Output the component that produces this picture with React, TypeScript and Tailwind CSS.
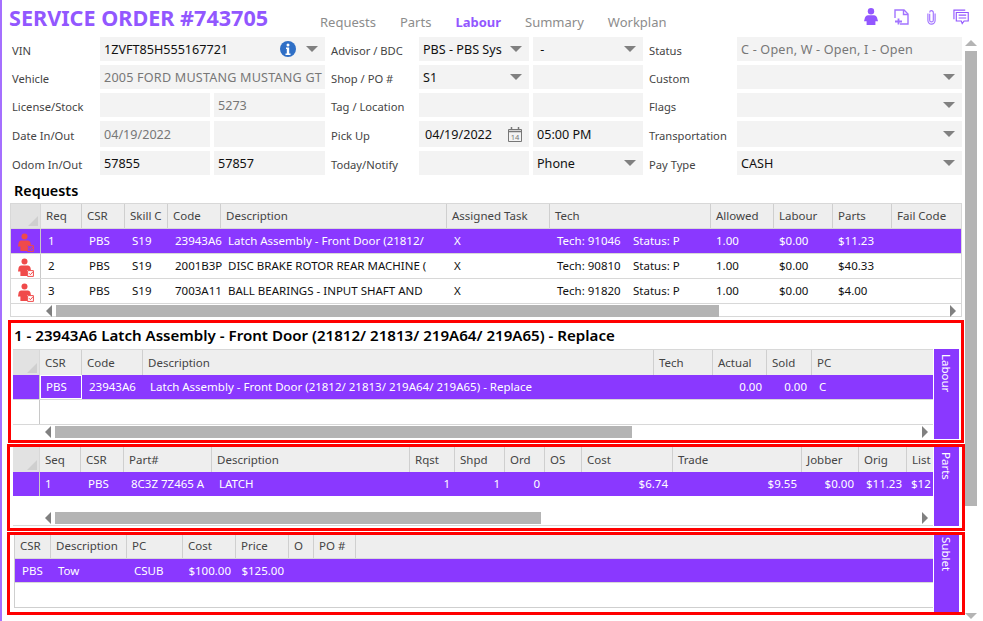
import type { ReactNode } from 'react';

const caret =
  'h-0 w-0 shrink-0 border-x-[6px] border-t-[6px] border-x-transparent border-t-[#808080]';

const Caret = () => <span className={caret} />;

const Label = ({ children }: { children: ReactNode }) => (
  <div className="flex items-center whitespace-nowrap pt-[3px] text-[11.2px] text-[#444]">{children}</div>
);

const Field = ({
  children,
  grey,
  select,
  className = '',
}: {
  children?: ReactNode;
  grey?: boolean;
  select?: boolean;
  className?: string;
}) => (
  <div
    className={`flex items-center justify-between overflow-hidden whitespace-nowrap bg-[#f3f3f3] pl-1 pr-[7px] text-[12.6px] ${
      grey ? 'text-[#777]' : 'text-[#111]'
    } ${className}`}
  >
    <span className="pt-px">{children}</span>
    {select && <Caret />}
  </div>
);

const PersonIcon = () => (
  <svg viewBox="0 0 14 17" className="h-[17px] w-[14px] fill-[#9257ff]">
    <circle cx="7" cy="3.2" r="3.2" />
    <path d="M4 7.2h6c1.5 0 2.5 1 3 2.4l1 3.6h-2.6V17H2.6v-3.8H0l1-3.6c.5-1.4 1.5-2.4 3-2.4z" />
  </svg>
);

const FileIcon = () => (
  <svg
    viewBox="0 0 15 16"
    className="h-[16px] w-[15px] fill-none stroke-[#a274ff] stroke-[1.4]"
  >
    <path d="M6 15h8V5l-4-4H1v8" />
    <path d="M9.5 1v4.5H14" />
    <path d="M4.5 9.5v6M1 12.5h7" strokeWidth="1.8" />
  </svg>
);

const ClipIcon = () => (
  <svg
    viewBox="0 0 10 16"
    className="h-[16px] w-[9px] fill-none stroke-[#a274ff] stroke-[1.3]"
  >
    <path d="M3 4.5v7a2 2 0 0 0 4 0V3a2 2 0 0 0-4 0" />
    <path d="M9 4v8a4 4 0 0 1-8 0V4" />
  </svg>
);

const CommentIcon = () => (
  <svg
    viewBox="0 0 17 17"
    className="h-[16px] w-[16px] fill-none stroke-[#9257ff] stroke-[1.2]"
  >
    <path d="M1 11V1.2h12" />
    <path d="M3.5 3.7h12.7v9h-4.4L9.8 15.5l-1-2.8H3.5z" />
    <path d="M6 6.5h8M6 9.5h8" />
  </svg>
);

const InfoIcon = () => (
  <svg viewBox="0 0 16 16" className="h-[16px] w-[16px] shrink-0">
    <circle cx="8" cy="8" r="8" fill="#2f6fc6" />
    <circle cx="8" cy="4" r="1.5" fill="#fff" />
    <path d="M6 6.5h3.2v6H10.5V14h-5v-1.5h1.3V8H6z" fill="#fff" />
  </svg>
);

const CalendarIcon = () => (
  <svg viewBox="0 0 14 15" className="h-[15px] w-[14px] shrink-0 fill-none stroke-[#777]">
    <path d="M.5 2.5h13v12H.5z" />
    <path d="M.5 4.5h13" strokeWidth="1.5" />
    <path d="M3.5 0v3M10.5 0v3" strokeWidth="1.5" />
    <text x="7" y="13" fontSize="7.5" textAnchor="middle" fill="#777" stroke="none">
      14
    </text>
  </svg>
);

const TechIcon = () => (
  <svg viewBox="0 0 16 19" className="mb-px h-[19px] w-[16px]">
    <circle cx="6.5" cy="3.4" r="3" fill="#f04a4a" />
    <path
      d="M3.2 7.4h6.6c1.6 0 2.4 1 2.7 2.4l.4 2.2H9v6H2.4v-4.6H0l.6-3.6c.3-1.4 1.1-2.4 2.6-2.4z"
      fill="#f04a4a"
    />
    <path d="M9.6 12.6h5.8v5.8H9.6z" fill="none" stroke="#f04a4a" />
    <path d="m11 15.2 1.4 1.5 2.6-3" fill="none" stroke="#f04a4a" />
  </svg>
);

const HScroll = ({ thumb, className }: { thumb: string; className: string }) => (
  <div className={`flex items-center ${className}`}>
    <span className="h-0 w-0 shrink-0 border-y-[6px] border-r-[6px] border-y-transparent border-r-[#808080]" />
    <div className={`ml-[4px] h-[12px] bg-[#b4b4b4] ${thumb}`} />
    <span className="ml-auto h-0 w-0 shrink-0 border-y-[6px] border-l-[6px] border-y-transparent border-l-[#808080]" />
  </div>
);

const Head = ({
  cols,
  labels,
  corner,
  size = 'h-[25px]',
  pad = 'pt-[5px]',
}: {
  cols: string;
  labels: string[];
  corner?: boolean;
  size?: string;
  pad?: string;
}) => (
  <div className={`grid ${size} ${cols} bg-[#eeeeee]`}>
    {corner && (
      <div className="relative border-r border-[#d8d8d8] bg-[#e2e2e2]">
        <span className="absolute bottom-[2px] right-[2px] h-0 w-0 border-b-[10px] border-l-[10px] border-b-[#cfcfcf] border-l-transparent" />
      </div>
    )}
    {labels.map((l, i) => (
      <div
        key={i}
        className={`overflow-hidden whitespace-nowrap border-r border-[#cfcfcf] pl-[5px] text-[#444] last:border-r-0 ${pad}`}
      >
        {l}
      </div>
    ))}
  </div>
);

const Cell = ({ children, right }: { children?: ReactNode; right?: boolean }) => (
  <div className={`whitespace-nowrap pt-[4px] ${right ? 'pr-[5px] text-right' : 'pl-[7px]'}`}>
    {children}
  </div>
);

const SideTab = ({ label, className }: { label: string; className: string }) => (
  <div
    className={`w-[25px] shrink-0 bg-[#8a38ff] text-[11.5px] leading-[25px] text-white [writing-mode:vertical-rl] ${className}`}
  >
    {label}
  </div>
);

const reqCols =
  'grid-cols-[30px_41px_43px_43px_53px_226px_103px_161px_63px_59px_59px_69px]';
const reqLabels = [
  'Req',
  'CSR',
  'Skill C',
  'Code',
  'Description',
  'Assigned Task',
  'Tech',
  'Allowed',
  'Labour',
  'Parts',
  'Fail Code',
];
const requests = [
  ['1', 'S19', '23943A6', 'Latch Assembly - Front Door (21812/', '91046', '$11.23'],
  ['2', 'S19', '2001B3P', 'DISC BRAKE ROTOR REAR MACHINE (', '90810', '$40.33'],
  ['3', 'S19', '7003A11', 'BALL BEARINGS - INPUT SHAFT AND', '91820', '$4.00'],
];

const labourCols = 'grid-cols-[27px_42px_61px_511px_59px_54px_45px_121px]';
const partsCols =
  'grid-cols-[27px_41px_43px_88px_198px_45px_50px_40px_37px_91px_129px_57px_48px_26px]';
const subletCols = 'grid-cols-[36px_76px_56px_53px_53px_25px_42px_1fr]';

export default function App() {
  return (
    <div className="flex h-[621px] w-[983px] overflow-hidden bg-white font-['Open_Sans','Noto_Sans',sans-serif] text-[11.5px] leading-[16px] text-[#111]">
      <div className="w-[2px] shrink-0 bg-[#a56fff]" />

      <div className="w-[963px] shrink-0">
        <div className="flex h-[37px] items-start">
          <h1 className="ml-[7px] w-[311px] whitespace-nowrap pt-[3px] text-[21.6px] font-bold leading-[30px] text-[#9257ff]">
            SERVICE ORDER #743705
          </h1>
          <nav className="flex gap-[24px] pt-[14px] text-[13px] text-[#8c8c8c]">
            <span>Requests</span>
            <span>Parts</span>
            <span className="font-bold text-[#9257ff]">Labour</span>
            <span>Summary</span>
            <span>Workplan</span>
          </nav>
          <div className="ml-auto mr-[-4px] flex items-center pt-[8px]">
            <PersonIcon />
            <span className="ml-[16px]">
              <FileIcon />
            </span>
            <span className="ml-[18px]">
              <ClipIcon />
            </span>
            <span className="ml-[17px]">
              <CommentIcon />
            </span>
          </div>
        </div>

        <div className="ml-[10px] grid grid-cols-[84px_110px_111px_86px_110px_110px_86px_225px] grid-rows-[24px_24px_24px_26px_24px] gap-x-1 gap-y-1">
          <Label>VIN</Label>
          <div className="col-span-2 flex items-center justify-between bg-[#f3f3f3] pl-1 pr-[7px] text-[12.6px]">
            <span className="pt-px">1ZVFT85H555167721</span>
            <span className="ml-auto mr-[10px]">
              <InfoIcon />
            </span>
            <Caret />
          </div>
          <Label>
            <span className="pl-[2px]">Advisor / BDC</span>
          </Label>
          <Field select>PBS - PBS Sys</Field>
          <Field select>&nbsp;-</Field>
          <Label>
            <span className="pl-[2px]">Status</span>
          </Label>
          <Field grey className="tracking-[0.2px]">
            C - Open, W - Open, I - Open
          </Field>

          <Label>Vehicle</Label>
          <Field grey className="col-span-2 tracking-[0.2px]">
            2005 FORD MUSTANG MUSTANG GT
          </Field>
          <Label>
            <span className="pl-[2px]">Shop / PO #</span>
          </Label>
          <Field select>S1</Field>
          <Field />
          <Label>
            <span className="pl-[2px]">Custom</span>
          </Label>
          <Field select />

          <Label>License/Stock</Label>
          <Field />
          <Field grey>5273</Field>
          <Label>
            <span className="pl-[2px]">Tag / Location</span>
          </Label>
          <Field />
          <Field />
          <Label>
            <span className="pl-[2px]">Flags</span>
          </Label>
          <Field select />

          <Label>Date In/Out</Label>
          <Field grey>04/19/2022</Field>
          <Field />
          <Label>
            <span className="pl-[2px]">Pick Up</span>
          </Label>
          <div className="flex items-center justify-between bg-[#f3f3f3] pl-[6px] pr-[7px] text-[12.6px]">
            <span className="pt-px">04/19/2022</span>
            <CalendarIcon />
          </div>
          <Field>05:00 PM</Field>
          <Label>
            <span className="pl-[2px]">Transportation</span>
          </Label>
          <Field select />

          <Label>Odom In/Out</Label>
          <Field>57855</Field>
          <Field>57857</Field>
          <Label>
            <span className="pl-[2px]">Today/Notify</span>
          </Label>
          <Field />
          <Field select>Phone</Field>
          <Label>
            <span className="pl-[2px]">Pay Type</span>
          </Label>
          <Field select>CASH</Field>
        </div>

        <h2 className="ml-[12px] h-[28px] pt-[7px] text-[14.4px] font-semibold leading-[18px] text-black">
          Requests
        </h2>

        <div className="ml-[8px] h-[114px] w-[952px] border border-[#d8d8d8]">
          <Head cols={reqCols} labels={reqLabels} corner size="h-[24px]" pad="pt-[4px]" />
          {requests.map((r, i) => (
            <div
              key={r[0]}
              className={`grid h-[25px] ${reqCols} border-t border-[#d8d8d8] ${
                i === 0 ? 'bg-[#8a38ff] text-white' : ''
              }`}
            >
              <div className="flex items-end justify-center border-r border-[#c8c8c8]">
                <TechIcon />
              </div>
              <Cell>{r[0]}</Cell>
              <Cell>PBS</Cell>
              <Cell>{r[1]}</Cell>
              <Cell>{r[2]}</Cell>
              <div className="overflow-hidden whitespace-nowrap pl-[7px] pr-[19px] pt-[4px]">{r[3]}</div>
              <Cell>X</Cell>
              <div className="flex whitespace-nowrap pl-[7px] pt-[4px]">
                <span className="w-[76px]">Tech: {r[4]}</span>
                <span>Status: P</span>
              </div>
              <div className="whitespace-nowrap pl-[5px] pt-[4px]">1.00</div>
              <div className="whitespace-nowrap pl-[5px] pt-[4px]">$0.00</div>
              <div className="whitespace-nowrap pl-[5px] pt-[4px]">{r[5]}</div>
              <div />
            </div>
          ))}
          <HScroll thumb="w-[663px]" className="h-[14px] border-t border-[#d8d8d8] pl-[35px] pr-[5px]" />
        </div>

        <section className="ml-[6px] mt-[3px] h-[123px] w-[956px] border-[3px] border-[#ff0000]">
          <div className="h-[26px] whitespace-nowrap pl-[3px] pt-[3px] text-[15.1px] font-semibold leading-[18px] text-black">
            1 - 23943A6 Latch Assembly - Front Door (21812/ 21813/ 219A64/ 219A65) - Replace
          </div>
          <div className="flex pl-[2px]">
            <div className="h-[90px] w-[920px] border-t border-[#d8d8d8]">
              <Head
                cols={labourCols}
                labels={['CSR', 'Code', 'Description', 'Tech', 'Actual', 'Sold', 'PC']}
                corner
              />
              <div className={`grid h-[25px] ${labourCols} border-b border-[#d8d8d8] bg-[#8a38ff] text-white`}>
                <div className="border-r border-[#c8c8c8]" />
                <div className="border border-white pl-[5px] pt-[3px]">PBS</div>
                <Cell>23943A6</Cell>
                <Cell>Latch Assembly - Front Door (21812/ 21813/ 219A64/ 219A65) - Replace</Cell>
                <Cell />
                <Cell right>0.00</Cell>
                <Cell right>0.00</Cell>
                <Cell>C</Cell>
              </div>
              <div className="h-[25px] border-b border-[#d8d8d8]">
                <div className="h-full w-[27px] border-r border-[#c8c8c8]" />
              </div>
              <HScroll thumb="w-[577px]" className="h-[14px] pl-[32px] pr-[5px]" />
            </div>
            <SideTab label="Labour" className="ml-px h-[90px] pt-[5px]" />
          </div>
        </section>

        <section className="ml-[5px] mt-px h-[87px] w-[958px] border-[3px] border-[#ff0000]">
          <div className="flex pl-[3px]">
            <div className="h-[79px] w-[920px] border-b border-[#d8d8d8]">
              <Head
                cols={partsCols}
                labels={[
                  'Seq',
                  'CSR',
                  'Part#',
                  'Description',
                  'Rqst',
                  'Shpd',
                  'Ord',
                  'OS',
                  'Cost',
                  'Trade',
                  'Jobber',
                  'Orig',
                  'List',
                ]}
                corner
              />
              <div className={`grid h-[24px] ${partsCols} bg-[#8a38ff] text-white`}>
                <div className="border-r border-[#c8c8c8]" />
                <div className="whitespace-nowrap pl-[5px] pt-[4px]">1</div>
                <Cell>PBS</Cell>
                <Cell>8C3Z 7Z465 A</Cell>
                <Cell>LATCH</Cell>
                <Cell right>1</Cell>
                <Cell right>1</Cell>
                <Cell right>0</Cell>
                <Cell />
                <Cell right>$6.74</Cell>
                <Cell right>$9.55</Cell>
                <Cell right>$0.00</Cell>
                <Cell right>$11.23</Cell>
                <div className="whitespace-nowrap pl-[4px] pt-[4px]">$12</div>
              </div>
              <HScroll thumb="w-[486px]" className="mt-[16px] h-[12px] pl-[32px] pr-[5px]" />
            </div>
            <SideTab label="Parts" className="ml-px h-[79px] pt-[5px]" />
          </div>
        </section>

        <section className="ml-[5px] mt-px h-[83px] w-[958px] border-[3px] border-[#ff0000]">
          <div className="flex pl-[4px]">
            <div className="h-[73px] w-[919px] border-b border-l border-[#cfcfcf]">
              <Head
                cols={subletCols}
                labels={['CSR', 'Description', 'PC', 'Cost', 'Price', 'O', 'PO #', '']}
                size="h-[23px]"
                pad="pt-[3px]"
              />
              <div className={`grid h-[25px] ${subletCols} border-b border-t border-[#d8d8d8] bg-[#8a38ff] text-white`}>
                <Cell>PBS</Cell>
                <Cell>Tow</Cell>
                <Cell>CSUB</Cell>
                <Cell right>$100.00</Cell>
                <Cell right>$125.00</Cell>
              </div>
            </div>
            <SideTab label="Sublet" className="ml-px h-[77px] pt-[2px]" />
          </div>
        </section>
      </div>

      <div className="flex h-full w-[13px] shrink-0 flex-col pb-[2px] pt-[40px]">
        <span className="h-0 w-0 border-x-[6px] border-b-[6px] border-x-transparent border-b-[#b4b4b4]" />
        <div className="mt-[5px] h-[455px] w-[12px] bg-[#b4b4b4]" />
        <span className="mt-auto h-0 w-0 border-x-[6px] border-t-[6px] border-x-transparent border-t-[#b4b4b4]" />
      </div>
    </div>
  );
}
